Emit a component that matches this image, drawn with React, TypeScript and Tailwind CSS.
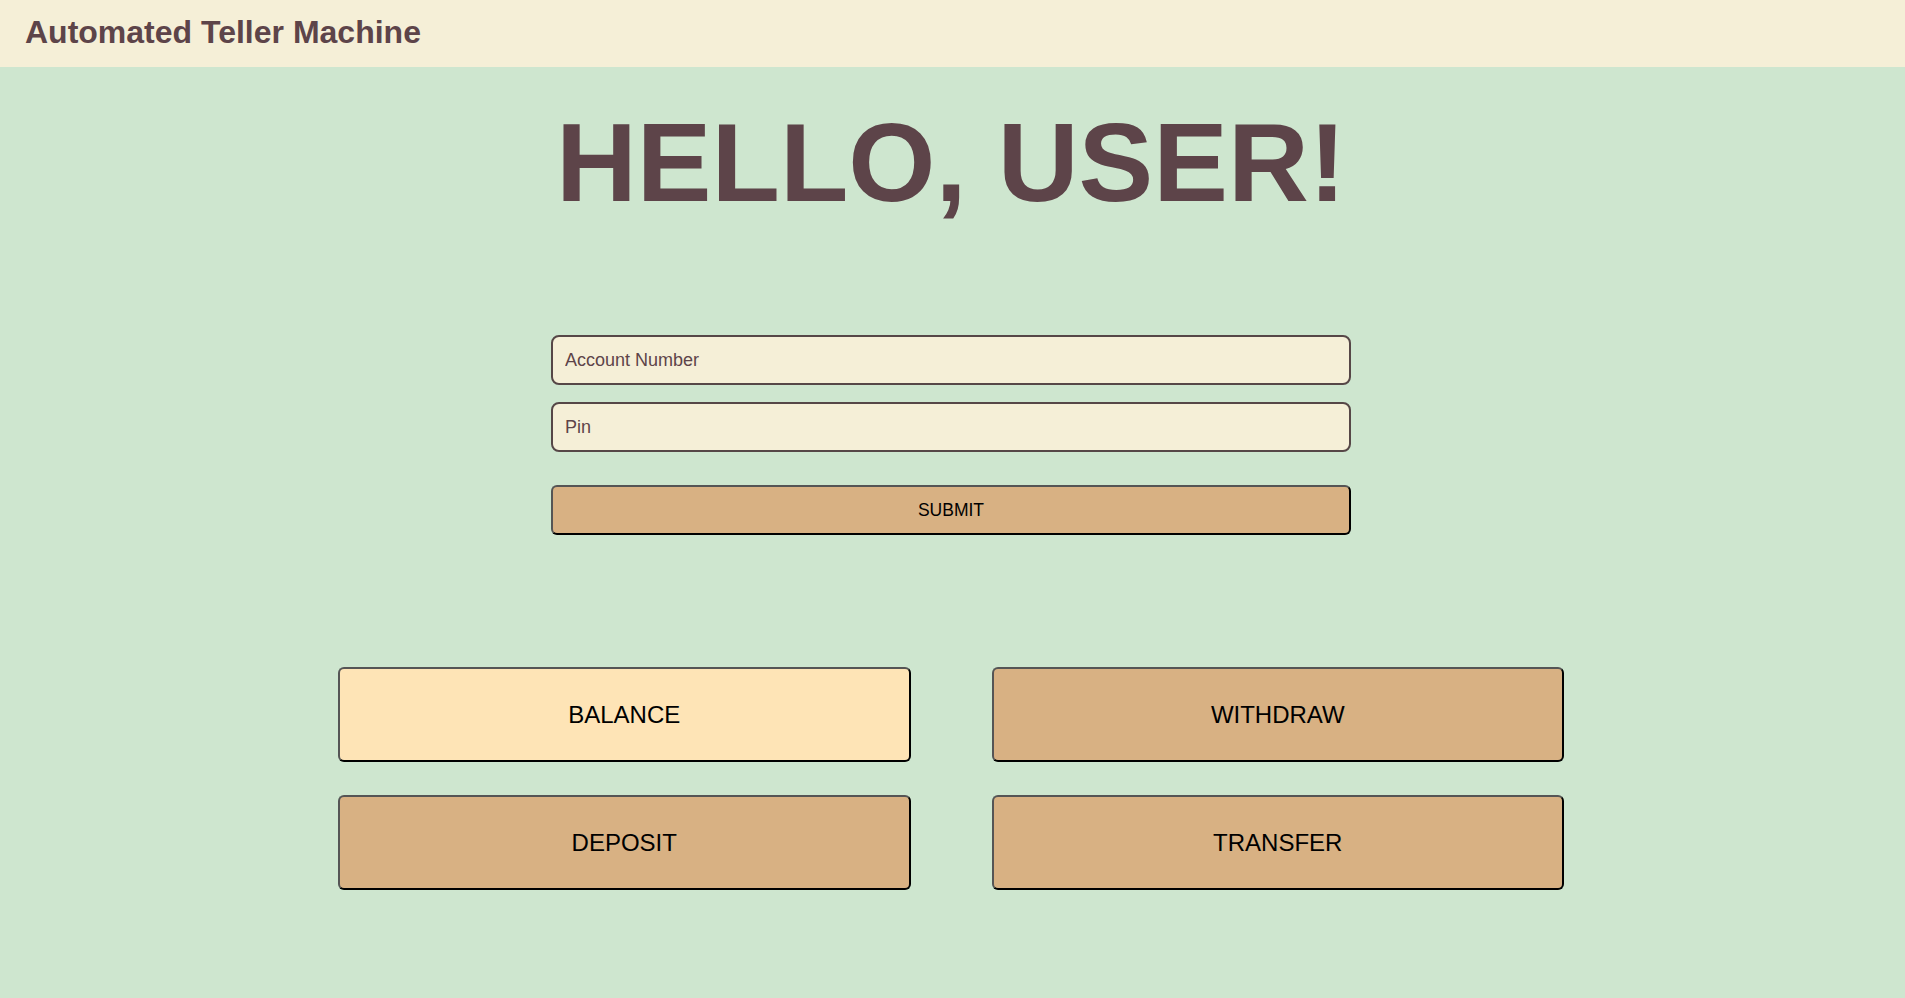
import { useState } from "react";

const actions = [
  { label: "BALANCE", active: true },
  { label: "WITHDRAW", active: false },
  { label: "DEPOSIT", active: false },
  { label: "TRANSFER", active: false },
];

const App = () => {
  const [account, setAccount] = useState("");
  const [pin, setPin] = useState("");

  return (
    <div
      className="min-h-screen w-full bg-[#cee6cf]"
      style={{ fontFamily: '"Liberation Sans", Arial, sans-serif' }}
    >
      <header className="h-[67px] flex items-center px-[25px] pb-[3px] bg-[#f5efd7]">
        <h1 className="text-[32px] font-bold text-[#5d4449] leading-none">
          Automated Teller Machine
        </h1>
      </header>

      <main className="pr-[3px]">
        <h2 className="mt-[40px] text-center text-[112px] font-bold leading-none text-[#5d4449]">
          HELLO, USER!
        </h2>

        <form
          className="w-[800px] mx-auto mt-[116px] flex flex-col"
          onSubmit={(e) => e.preventDefault()}
        >
          <input
            value={account}
            onChange={(e) => setAccount(e.target.value)}
            placeholder="Account Number"
            className="h-[50px] px-3 rounded-lg border-2 border-[#564747] bg-[#f5efd7] text-[18px] text-[#5d4449] placeholder:text-[#5d4449] outline-none"
          />
          <input
            value={pin}
            onChange={(e) => setPin(e.target.value)}
            placeholder="Pin"
            type="password"
            className="mt-[17px] h-[50px] px-3 rounded-lg border-2 border-[#564747] bg-[#f5efd7] text-[18px] text-[#5d4449] placeholder:text-[#5d4449] outline-none"
          />
          <button
            type="submit"
            className="mt-[33px] h-[50px] rounded-md border-2 border-[#555] border-b-black border-r-black bg-[#d8b183] text-[17.5px] text-black"
          >
            SUBMIT
          </button>
        </form>

        <div className="w-[1226px] mx-auto mt-[132px] grid grid-cols-2 gap-x-[81px] gap-y-[33px]">
          {actions.map((a) => (
            <button
              key={a.label}
              className={`h-[95px] rounded-md border-2 border-[#555] border-b-black border-r-black text-[24px] text-black ${
                a.active ? "bg-[#fee4b6]" : "bg-[#d8b183]"
              }`}
            >
              {a.label}
            </button>
          ))}
        </div>
      </main>
    </div>
  );
};

export default App;
